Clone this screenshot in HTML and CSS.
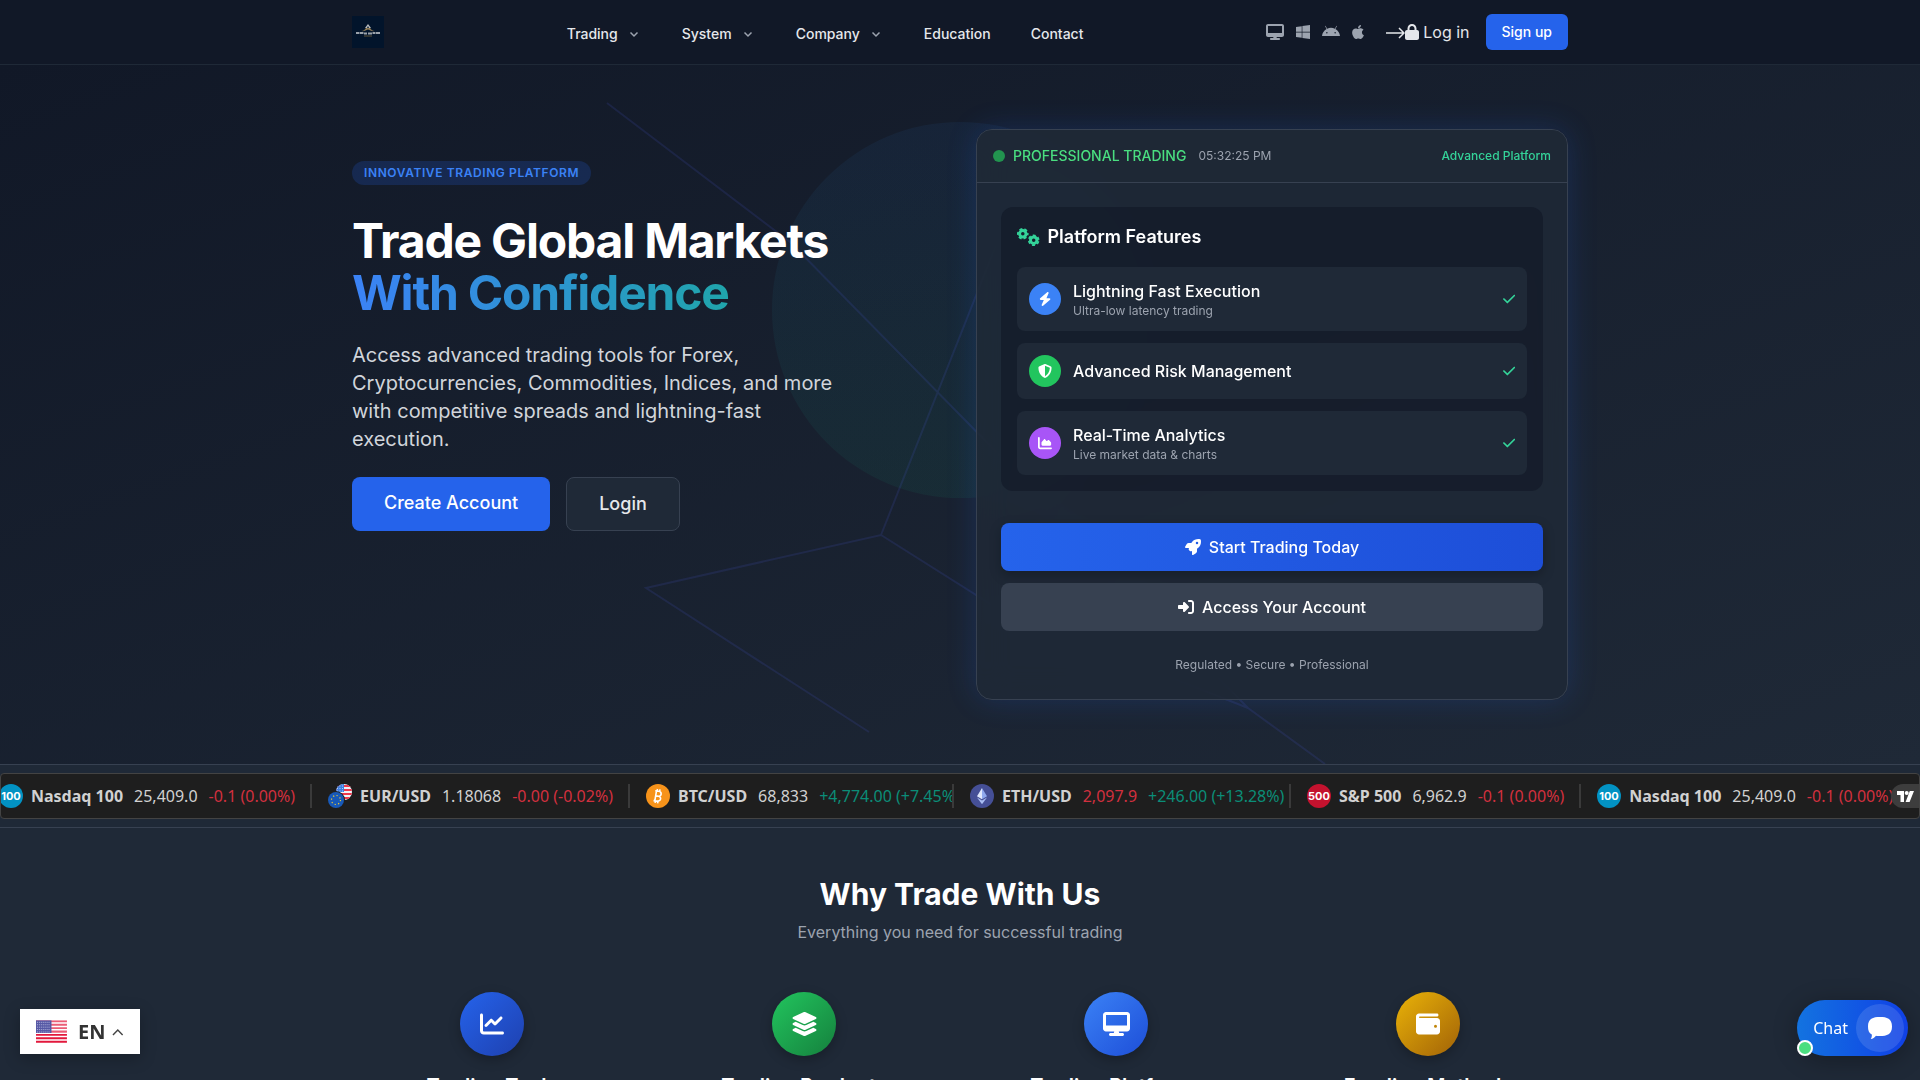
FILE: index.html
```
<!DOCTYPE html>
<html lang="en">
<head>
    <meta charset="UTF-8">
    <meta name="viewport" content="width=device-width, initial-scale=1.0">
    <title>Trade Global Markets With Confidence</title>
    <link rel="stylesheet" href="styles.css">
</head>
<body>
    <header class="site-header">
        <div class="container header-inner">
            <a href="#" class="logo" aria-label="Home">
                <svg width="32" height="32" viewBox="0 0 32 32">
                    <rect width="32" height="32" fill="#02142b"/>
                    <path d="M16 8l3 4-2 0-1-2-1 2-2 0z" fill="#b9bcc0"/>
                    <path d="M9 15c3 0 4-2 5-3h4c1 1 2 3 5 3-3 .6-5-.6-7-1.4-2 .8-4 2-7 1.4z" fill="#8d7a55"/>
                    <path d="M4 17h3M7.500 17h4M12 17.500h3M16 17.500h4M20.500 17h3M24 17h4" stroke="#9aa1aa" stroke-width="2"/>
                    <path d="M12 20h8" stroke="#5f5238"/>
                </svg>
            </a>
            <nav class="main-nav">
                <a href="#">Trading <svg class="chevron" viewBox="0 0 16 16"><path d="M4.5 6.500L8 10l3.500-3.500"/></svg></a>
                <a href="#">System <svg class="chevron" viewBox="0 0 16 16"><path d="M4.5 6.500L8 10l3.500-3.500"/></svg></a>
                <a href="#">Company <svg class="chevron" viewBox="0 0 16 16"><path d="M4.5 6.500L8 10l3.500-3.500"/></svg></a>
                <a href="#">Education</a>
                <a href="#">Contact</a>
            </nav>
            <div class="header-actions">
                <div class="platforms">
                    <a href="#" aria-label="Desktop"><svg class="icon" viewBox="0 0 576 512"><path d="M64 0C28.700 0 0 28.700 0 64V352c0 35.300 28.700 64 64 64H240l-10.700 32H160c-17.700 0-32 14.300-32 32s14.300 32 32 32H416c17.700 0 32-14.300 32-32s-14.300-32-32-32H346.700L336 416H512c35.300 0 64-28.700 64-64V64c0-35.300-28.700-64-64-64H64zM512 64V288H64V64H512z"/></svg></a>
                    <a href="#" aria-label="Windows"><svg class="icon" viewBox="0 0 448 512"><path d="M0 93.700l183.600-25.300v177.400H0V93.700zm0 324.600l183.600 25.300V268.400H0v149.900zm203.800 28L448 480V268.400H203.800v177.900zm0-380.600v180.100H448V32L203.800 65.700z"/></svg></a>
                    <a href="#" aria-label="Android"><svg class="icon" viewBox="0 0 576 512"><path d="M420.550,301.930a24,24,0,1,1,24-24,24,24,0,0,1-24,24m-265.100,0a24,24,0,1,1,24-24,24,24,0,0,1-24,24m273.700-144.480,47.940-83a10,10,0,1,0-17.270-10h0l-48.540,84.070a301.250,301.250,0,0,0-246.560,0L116.180,64.450a10,10,0,1,0-17.270,10h0l47.940,83C64.530,202.220,8.240,285.550,0,384H576c-8.240-98.450-64.540-181.780-146.850-226.550"/></svg></a>
                    <a href="#" aria-label="Apple"><svg class="icon" viewBox="0 0 384 512"><path d="M318.700 268.700c-.2-36.700 16.400-64.400 50-84.800-18.800-26.900-47.200-41.700-84.700-44.600-35.500-2.800-74.300 20.700-88.500 20.700-15 0-49.400-19.700-76.400-19.700C63.300 141.200 4 184.800 4 273.500q0 39.300 14.400 81.200c12.800 36.700 59 126.700 107.200 125.200 25.200-.6 43-17.900 75.800-17.900 31.800 0 48.300 17.900 76.400 17.900 48.600-.7 90.400-82.500 102.600-119.300-65.200-30.700-61.700-90-61.700-91.900zm-56.600-164.200c27.300-32.400 24.800-61.900 24-72.500-24.100 1.400-52 16.400-67.900 34.900-17.500 19.800-27.800 44.300-25.600 71.900 26.100 2 49.900-11.400 69.500-34.300z"/></svg></a>
                </div>
                <a href="#" class="login-link">
                    <svg class="arrow" width="19" height="16" viewBox="0 0 19 16"><path d="M0 9h18M13 4l5 5-5 5"/></svg>
                    <svg class="icon" viewBox="0 0 448 512"><path d="M144 144v48H304V144c0-44.200-35.800-80-80-80s-80 35.800-80 80zM80 192V144C80 64.500 144.500 0 224 0s144 64.500 144 144v48h16c35.300 0 64 28.700 64 64V448c0 35.300-28.700 64-64 64H64c-35.300 0-64-28.700-64-64V256c0-35.300 28.700-64 64-64H80z"/></svg>
                    <span>Log in</span>
                </a>
                <a href="#" class="signup">Sign up</a>
            </div>
        </div>
    </header>

    <main>
        <section class="hero">
            <svg class="hero-bg" viewBox="0 0 1920 699" preserveAspectRatio="xMidYMid slice" aria-hidden="true">
                <defs>
                    <linearGradient id="orb" x1="0" y1="0" x2="0" y2="1">
                        <stop offset="0" stop-color="#2f7fe0" stop-opacity=".07"/>
                        <stop offset="1" stop-color="#10b981" stop-opacity=".07"/>
                    </linearGradient>
                </defs>
                <circle cx="960" cy="245" r="188" fill="url(#orb)"/>
                <path class="mesh" d="M607 38L790 177L1248 643L1325 699M881 470L1010 145M869 667L646 523L881 470L1000 545L1248 643"/>
            </svg>
            <div class="container hero-grid">
                <div class="hero-copy">
                    <span class="badge">INNOVATIVE TRADING PLATFORM</span>
                    <h1>Trade Global Markets <span class="gradient-text">With Confidence</span></h1>
                    <p>Access advanced trading tools for Forex, Cryptocurrencies, Commodities, Indices, and more with competitive spreads and lightning-fast execution.</p>
                    <div class="hero-buttons">
                        <a href="#" class="btn btn-primary">Create Account</a>
                        <a href="#" class="btn btn-outline">Login</a>
                    </div>
                </div>

                <div class="panel">
                    <div class="panel-head">
                        <span class="dot"></span>
                        <span class="panel-title">PROFESSIONAL TRADING</span>
                        <span class="clock">05:32:25 PM</span>
                        <span class="panel-tag">Advanced Platform</span>
                    </div>
                    <div class="panel-body">
                        <div class="features">
                            <h2>
                                <svg class="icon gears" viewBox="0 0 640 512">
                                    <g fill="none">
                                        <circle cx="165" cy="165" r="92" stroke-width="84"/>
                                        <circle cx="165" cy="165" r="140" stroke-width="50" stroke-dasharray="84 62.600" stroke-dashoffset="42"/>
                                        <circle cx="475" cy="347" r="92" stroke-width="84"/>
                                        <circle cx="475" cy="347" r="140" stroke-width="50" stroke-dasharray="84 62.600" stroke-dashoffset="-31"/>
                                    </g>
                                </svg>
                                Platform Features
                            </h2>
                            <ul>
                                <li>
                                    <span class="round blue"><svg class="icon" viewBox="0 0 448 512"><path d="M349.400 44.600c5.900-13.700 1.500-29.700-10.600-38.500s-28.600-8-39.900 1.800l-256 224c-10 8.800-13.600 22.900-8.900 35.300S50.700 288 64 288H175.500L98.600 467.400c-5.900 13.700-1.500 29.700 10.600 38.500s28.600 8 39.900-1.800l256-224c10-8.800 13.600-22.900 8.900-35.300s-16.600-20.700-30-20.700H272.500L349.400 44.600z"/></svg></span>
                                    <div class="feature-text">
                                        <h3>Lightning Fast Execution</h3>
                                        <p>Ultra-low latency trading</p>
                                    </div>
                                    <svg class="icon check" viewBox="0 0 448 512"><path d="M438.600 105.400c12.500 12.500 12.500 32.800 0 45.300l-256 256c-12.500 12.500-32.800 12.500-45.300 0l-128-128c-12.500-12.500-12.500-32.800 0-45.300s32.800-12.500 45.300 0L160 338.700 393.400 105.400c12.500-12.500 32.800-12.500 45.300 0z"/></svg>
                                </li>
                                <li>
                                    <span class="round green"><svg class="icon" viewBox="0 0 512 512"><path d="M256 0c4.600 0 9.200 1 13.400 2.900L457.700 82.800c22 9.300 38.400 31 38.300 57.200c-.5 99.200-41.300 280.700-213.600 363.200c-16.700 8-36.100 8-52.800 0C57.300 420.700 16.500 239.200 16 140c-.1-26.200 16.300-47.900 38.300-57.200L242.700 2.900C246.800 1 251.400 0 256 0zm0 66.800V444.800C394 378 431.100 230.100 432 141.400L256 66.800l0 0z"/></svg></span>
                                    <div class="feature-text">
                                        <h3>Advanced Risk Management</h3>
                                    </div>
                                    <svg class="icon check" viewBox="0 0 448 512"><path d="M438.600 105.400c12.500 12.500 12.500 32.800 0 45.300l-256 256c-12.500 12.500-32.800 12.500-45.300 0l-128-128c-12.500-12.500-12.500-32.800 0-45.300s32.800-12.500 45.300 0L160 338.700 393.400 105.400c12.500-12.500 32.800-12.500 45.300 0z"/></svg>
                                </li>
                                <li>
                                    <span class="round purple"><svg class="icon" viewBox="0 0 512 512"><path d="M64 64c0-17.700-14.300-32-32-32S0 46.300 0 64V400c0 44.200 35.800 80 80 80H480c17.700 0 32-14.300 32-32s-14.300-32-32-32H80c-8.800 0-16-7.200-16-16V64zm96 288H448c17.700 0 32-14.300 32-32V251.800c0-7.600-2.700-15-7.700-20.800l-65.800-76.800c-12.100-14.200-33.700-15-46.900-1.800l-21 21c-10 10-26.400 9.200-35.400-1.600l-39.200-47c-12.600-15.100-35.700-15.400-48.700-.6L135.900 215c-5.100 5.800-7.900 13.300-7.900 21.100v84c0 17.700 14.300 32 32 32z"/></svg></span>
                                    <div class="feature-text">
                                        <h3>Real-Time Analytics</h3>
                                        <p>Live market data &amp; charts</p>
                                    </div>
                                    <svg class="icon check" viewBox="0 0 448 512"><path d="M438.600 105.400c12.500 12.500 12.500 32.800 0 45.300l-256 256c-12.500 12.500-32.800 12.500-45.300 0l-128-128c-12.500-12.500-12.500-32.800 0-45.300s32.800-12.500 45.300 0L160 338.700 393.400 105.400c12.500-12.500 32.800-12.500 45.300 0z"/></svg>
                                </li>
                            </ul>
                        </div>
                        <div class="panel-buttons">
                            <a href="#" class="panel-btn start">
                                <svg class="icon" viewBox="0 0 512 512"><path d="M156.600 384.900L125.700 354c-8.500-8.500-11.500-20.800-7.700-32.200c3-8.900 7-20.500 11.800-33.800L24 288c-8.600 0-16.600-4.600-20.900-12.100s-4.200-16.700 .2-24.100l52.500-88.500c13-21.900 36.500-35.300 61.900-35.300l82.300 0c2.400-4 4.800-7.700 7.200-11.300C289.100-4.100 411.100-8.100 483.900 5.300c11.600 2.100 20.600 11.200 22.800 22.800c13.400 72.900 9.300 194.800-111.400 276.700c-3.500 2.400-7.300 4.800-11.300 7.200v82.300c0 25.400-13.400 49-35.300 61.900l-88.500 52.500c-7.400 4.400-16.600 4.500-24.100 .2s-12.100-12.200-12.100-20.900V380.800c-14.100 4.900-26.400 8.900-35.700 11.900c-11.200 3.600-23.400 .5-31.800-7.800zM384 168a40 40 0 1 0 0-80 40 40 0 1 0 0 80z"/></svg>
                                Start Trading Today
                            </a>
                            <a href="#" class="panel-btn access">
                                <svg class="icon" viewBox="0 0 512 512"><path d="M217.900 105.900L340.700 228.700c7.200 7.200 11.300 17.100 11.300 27.300s-4.100 20.100-11.300 27.300L217.900 406.100c-6.400 6.400-15 9.900-24 9.900c-18.700 0-33.900-15.200-33.900-33.900l0-62.100L32 320c-17.700 0-32-14.300-32-32l0-64c0-17.700 14.300-32 32-32l128 0 0-62.100c0-18.700 15.200-33.900 33.900-33.900c9 0 17.600 3.600 24 9.900zM352 416l64 0c17.700 0 32-14.300 32-32l0-256c0-17.700-14.300-32-32-32l-64 0c-17.700 0-32-14.300-32-32s14.300-32 32-32l64 0c53 0 96 43 96 96l0 256c0 53-43 96-96 96l-64 0c-17.700 0-32-14.300-32-32s14.300-32 32-32z"/></svg>
                                Access Your Account
                            </a>
                        </div>
                        <p class="panel-note">Regulated • Secure • Professional</p>
                    </div>
                </div>
            </div>
        </section>

        <section class="ticker-section">
            <div class="ticker">
                <div class="ticker-item first">
                    <svg class="coin" viewBox="0 0 24 24"><circle cx="12" cy="12" r="12" fill="#0292c3"/><text x="12" y="16" text-anchor="middle">100</text></svg>
                    <b>Nasdaq 100</b><span>25,409.0</span><span class="down">-0.1 (0.00%)</span>
                </div>
                <div class="ticker-item">
                    <svg class="coin" viewBox="0 0 24 24">
                        <defs><clipPath id="us"><circle cx="16" cy="8" r="8"/></clipPath></defs>
                        <g clip-path="url(#us)">
                            <path d="M8 0h16v16H8z" fill="#f0f3fa"/>
                            <path d="M8 2h16M8 6h16M8 10h16M8 14h16" stroke="#f0394d" stroke-width="2"/>
                            <path d="M8 0h8v8H8z" fill="#3f7fe0"/>
                            <path d="M9 2h7M9 4.500h7M9 7h7" stroke="#a9cbff" stroke-dasharray="1 1.500"/>
                        </g>
                        <circle cx="8" cy="16" r="9" fill="#1e1e1e"/>
                        <circle cx="8" cy="16" r="8" fill="#1859b8"/>
                        <circle cx="8" cy="16" r="4.500" fill="none" stroke="#e3c439" stroke-width="1.200" stroke-dasharray="1.200 2.330"/>
                    </svg>
                    <b>EUR/USD</b><span>1.18068</span><span class="down">-0.00 (-0.02%)</span>
                </div>
                <div class="ticker-item btc">
                    <svg class="coin" viewBox="0 0 24 24">
                        <circle cx="12" cy="12" r="12" fill="#f7931a"/>
                        <path d="M10.500 6.800L8.800 16.800M7.500 16.600l3.800.5c3.700.5 4.600-4.200 1.200-4.800l-2.700-.4M9.200 6.700l3.600.6c3.400.6 3 4.800-.3 5M11.500 5l-.4 2.200M14 5.400l-.4 2.200M9.500 16.500l-.4 2.300M12 17l-.4 2.300" fill="none" stroke="#fff" stroke-width="1.600"/>
                    </svg>
                    <b>BTC/USD</b><span>68,833</span><span class="up">+4,774.00 (+7.45%)</span>
                </div>
                <div class="ticker-item eth">
                    <svg class="coin" viewBox="0 0 24 24">
                        <circle cx="12" cy="12" r="12" fill="#454f96"/>
                        <path d="M12 4l5 8.300-5 3z" fill="#8fa8ee"/><path d="M12 4l-5 8.300 5 3z" fill="#dfe7fc"/>
                        <path d="M7 13.600l5 3 5-3-5 6.600z" fill="#a9bdf3"/>
                    </svg>
                    <b>ETH/USD</b><span class="down">2,097.9</span><span class="up">+246.00 (+13.28%)</span>
                </div>
                <div class="ticker-item">
                    <svg class="coin" viewBox="0 0 24 24"><circle cx="12" cy="12" r="12" fill="#c4122e"/><text x="12" y="16" text-anchor="middle">500</text></svg>
                    <b>S&amp;P 500</b><span>6,962.9</span><span class="down">-0.1 (0.00%)</span>
                </div>
                <div class="ticker-item">
                    <svg class="coin" viewBox="0 0 24 24"><circle cx="12" cy="12" r="12" fill="#0292c3"/><text x="12" y="16" text-anchor="middle">100</text></svg>
                    <b>Nasdaq 100</b><span>25,409.0</span><span class="down">-0.1 (0.00%)</span>
                </div>
                <a href="#" class="tv-badge" aria-label="TradingView">
                    <svg width="17" height="11" viewBox="0 0 17 11"><path d="M0 0h7v11H3.500V4H0zM12.800 0H17l-4.400 11H8.600z" fill="#fff"/><circle cx="9.700" cy="2" r="2" fill="#fff"/></svg>
                </a>
            </div>
        </section>

        <section class="why">
            <div class="container">
                <h2>Why Trade With Us</h2>
                <p class="lead">Everything you need for successful trading</p>
                <div class="why-grid">
                    <div class="why-card">
                        <span class="why-icon tools"><svg class="icon" viewBox="0 0 512 512"><path d="M64 64c0-17.700-14.300-32-32-32S0 46.300 0 64V400c0 44.200 35.800 80 80 80H480c17.700 0 32-14.300 32-32s-14.300-32-32-32H80c-8.800 0-16-7.200-16-16V64zm406.600 86.600c12.500-12.500 12.500-32.800 0-45.300s-32.800-12.500-45.300 0L320 210.700l-57.400-57.400c-12.500-12.500-32.800-12.500-45.300 0l-112 112c-12.500 12.500-12.500 32.800 0 45.300s32.800 12.500 45.300 0L240 221.300l57.400 57.400c12.500 12.500 32.800 12.500 45.300 0l128-128z"/></svg></span>
                        <h3>Trading Tools</h3>
                    </div>
                    <div class="why-card">
                        <span class="why-icon products"><svg class="icon" viewBox="0 0 576 512"><path d="M264.500 5.200c14.900-6.900 32.100-6.900 47 0l218.600 101c8.500 3.900 13.900 12.400 13.900 21.800s-5.400 17.900-13.900 21.800l-218.600 101c-14.900 6.900-32.100 6.900-47 0L45.900 149.800C37.400 145.800 32 137.300 32 128s5.400-17.900 13.900-21.800L264.500 5.200zM476.900 209.600l53.200 24.600c8.500 3.900 13.900 12.400 13.900 21.800s-5.400 17.900-13.900 21.800l-218.600 101c-14.900 6.900-32.100 6.900-47 0L45.900 277.800C37.400 273.800 32 265.300 32 256s5.400-17.900 13.900-21.800l53.200-24.600 152 70.200c23.400 10.800 50.400 10.800 73.800 0l152-70.200zm-152 198.200l152-70.200 53.200 24.600c8.500 3.900 13.900 12.400 13.900 21.800s-5.400 17.900-13.900 21.800l-218.600 101c-14.900 6.900-32.100 6.900-47 0L45.900 405.800C37.400 401.800 32 393.300 32 384s5.400-17.900 13.900-21.800l53.200-24.600 152 70.200c23.400 10.800 50.400 10.800 73.800 0z"/></svg></span>
                        <h3>Trading Products</h3>
                    </div>
                    <div class="why-card">
                        <span class="why-icon platform"><svg class="icon" viewBox="0 0 576 512"><path d="M64 0C28.700 0 0 28.700 0 64V352c0 35.300 28.700 64 64 64H240l-10.700 32H160c-17.700 0-32 14.300-32 32s14.300 32 32 32H416c17.700 0 32-14.300 32-32s-14.300-32-32-32H346.700L336 416H512c35.300 0 64-28.700 64-64V64c0-35.300-28.700-64-64-64H64zM512 64V288H64V64H512z"/></svg></span>
                        <h3>Trading Platforms</h3>
                    </div>
                    <div class="why-card">
                        <span class="why-icon funding"><svg class="icon" viewBox="0 0 512 512"><path d="M64 32C28.700 32 0 60.700 0 96V416c0 35.300 28.700 64 64 64H448c35.300 0 64-28.700 64-64V192c0-35.300-28.700-64-64-64H80c-8.800 0-16-7.200-16-16s7.200-16 16-16H448c17.700 0 32-14.300 32-32s-14.300-32-32-32H64zM416 272a32 32 0 1 1 0 64 32 32 0 1 1 0-64z"/></svg></span>
                        <h3>Funding Methods</h3>
                    </div>
                </div>
            </div>
        </section>
    </main>

    <button class="lang" type="button">
        <svg width="32" height="24" viewBox="0 0 32 24">
            <path d="M0 0h32v24H0z" fill="#fff"/>
            <path d="M0 1h32M0 4.500h32M0 8h32M0 11.500h32M0 15h32M0 18.500h32M0 22h32" stroke="#e2183c" stroke-width="2"/>
            <path d="M0 0h32v12H0z" fill="#fff" opacity=".3"/>
            <path d="M0 0h16v13H0z" fill="#5558a5"/>
            <path d="M1 2h14M1 4.500h14M1 7h14M1 9.500h14M1 12h14" stroke="#b9bbdf" stroke-dasharray="1 1"/>
        </svg>
        <span>EN</span>
        <svg width="12" height="8" viewBox="0 0 12 8"><path d="M1 7l5-5 5 5" fill="none" stroke="#444" stroke-width="1.500"/></svg>
    </button>

    <button class="chat" type="button">
        <span>Chat</span>
        <span class="chat-icon">
            <svg width="24" height="22" viewBox="0 0 24 22"><path d="M12 0c7 0 12 1.500 12 9.500S19 19 12 19c-1.500 0-3 0-4-.3-1.500 1.800-3 3-5.200 3.300.8-1.300 1.200-2.600 1-4.400C1 16 0 13.500 0 9.500 0 1.500 5 0 12 0z" fill="#fff"/></svg>
        </span>
        <span class="status"></span>
    </button>
</body>
</html>
```
FILE: styles.css
```
* {
    margin: 0;
    padding: 0;
    box-sizing: border-box;
}
body {
    font-family: Inter, "Liberation Sans", sans-serif;
    font-size: 16px;
    line-height: 24px;
    color: #e5e7eb;
    background-color: #1f2937;
    overflow-x: hidden;
}
a {
    color: inherit;
    text-decoration: none;
}
ul {
    list-style: none;
}
.container {
    max-width: 1280px;
    margin: 0 auto;
    padding: 0 32px;
}
.icon {
    height: 1em;
    width: auto;
    display: block;
    flex: none;
    fill: currentColor;
}

/* header */
.site-header {
    background-color: #111827;
    border-bottom: 1px solid #1f2937;
}
.header-inner {
    height: 64px;
    display: flex;
    align-items: center;
    justify-content: space-between;
}
.logo svg {
    display: block;
}
.main-nav {
    display: flex;
    gap: 40px;
    padding-top: 4px;
    font-size: 14px;
    font-weight: 500;
}
.main-nav a {
    display: flex;
    align-items: center;
    gap: 8px;
}
.chevron {
    width: 16px;
    height: 16px;
    fill: none;
    stroke: #9ca3af;
    stroke-width: 1.5;
}
.header-actions,
.platforms,
.login-link {
    display: flex;
    align-items: center;
}
.platforms {
    gap: 12px;
    color: #9ca3af;
}
.login-link {
    margin: 0 16px 0 22px;
}
.login-link span {
    margin-left: 4px;
}
.arrow {
    fill: none;
    stroke: #e5e7eb;
    stroke-width: 1.5;
}
.signup {
    padding: 8px 16px;
    line-height: 20px;
    font-size: 14px;
    font-weight: 500;
    color: #fff;
    background-color: #2563eb;
    border-radius: 6px;
}

/* hero */
.hero {
    position: relative;
    padding: 64px 0;
    background: linear-gradient(to bottom right, #111827, #1f2937);
}
.hero-bg {
    position: absolute;
    top: 0;
    left: 0;
    width: 100%;
    height: 100%;
}
.mesh {
    fill: none;
    stroke: #4f5ae5;
    stroke-opacity: .14;
    stroke-width: 2;
}
.hero-grid {
    position: relative;
    display: grid;
    grid-template-columns: 1fr 1fr;
    gap: 32px;
}
.hero-copy {
    padding-top: 32px;
}
.badge {
    display: block;
    width: fit-content;
    padding: 4px 12px;
    font-size: 12px;
    line-height: 16px;
    font-weight: 600;
    letter-spacing: .05em;
    color: #3b82f6;
    background-color: rgba(37, 99, 235, .2);
    border-radius: 12px;
}
h1 {
    margin: 30px 0 22px;
    font-size: 48px;
    line-height: 52px;
    font-weight: 700;
    letter-spacing: -.025em;
    color: #fff;
}
.gradient-text {
    display: block;
    color: transparent;
    background: linear-gradient(to right, #3b82f6, #10b981);
    -webkit-background-clip: text;
    background-clip: text;
}
.hero-copy p {
    max-width: 500px;
    font-size: 20px;
    line-height: 28px;
    color: #d1d5db;
}
.hero-buttons {
    display: flex;
    gap: 16px;
    margin-top: 24px;
}
.btn {
    padding: 12px 32px;
    font-size: 18px;
    line-height: 28px;
    font-weight: 500;
    border-radius: 8px;
}
.btn-primary {
    color: #fff;
    background-color: #2563eb;
}
.btn-outline {
    background-color: #1f2937;
    border: 1px solid #374151;
}

/* trading panel */
.panel {
    background-color: rgba(31, 41, 55, .8);
    border: 1px solid #374151;
    border-radius: 16px;
    box-shadow: 0 0 30px rgba(37, 99, 235, .2);
    backdrop-filter: blur(16px);
    overflow: hidden;
}
.panel-head {
    display: flex;
    align-items: center;
    padding: 16px;
    line-height: 20px;
    font-size: 12px;
    background-color: rgba(31, 41, 55, .6);
    border-bottom: 1px solid #374151;
}
.dot {
    width: 12px;
    height: 12px;
    margin-right: 8px;
    border-radius: 50%;
    background-color: #22934f;
}
.panel-title {
    font-size: 14px;
    font-weight: 500;
    color: #4ade80;
}
.clock {
    margin-left: 12px;
    color: #9ca3af;
}
.panel-tag {
    margin-left: auto;
    font-weight: 500;
    color: #34d399;
}
.panel-body {
    padding: 24px;
}
.features {
    padding: 16px;
    background-color: rgba(17, 24, 39, .6);
    border-radius: 12px;
}
.features h2 {
    display: flex;
    align-items: center;
    gap: 8px;
    margin-bottom: 16px;
    font-size: 18px;
    line-height: 28px;
    font-weight: 600;
    color: #fff;
}
.gears {
    stroke: #34d399;
}
.features ul {
    display: grid;
    gap: 12px;
}
.features li {
    display: flex;
    align-items: center;
    gap: 12px;
    padding: 12px;
    background-color: #1f2937;
    border-radius: 8px;
}
.round {
    display: flex;
    align-items: center;
    justify-content: center;
    width: 32px;
    height: 32px;
    font-size: 14px;
    color: #fff;
    border-radius: 50%;
}
.blue { background-color: #3b82f6; }
.green { background-color: #22c55e; }
.purple { background-color: #a855f7; }
.feature-text {
    flex: 1;
}
.feature-text h3 {
    font-size: 16px;
    font-weight: 500;
    color: #fff;
}
.feature-text p {
    font-size: 12px;
    line-height: 16px;
    color: #9ca3af;
}
.check {
    font-size: 14px;
    color: #34d399;
}
.panel-buttons {
    display: grid;
    gap: 12px;
    margin: 32px 0 24px;
}
.panel-btn {
    display: flex;
    align-items: center;
    justify-content: center;
    gap: 8px;
    padding: 12px;
    font-weight: 500;
    color: #fff;
    border-radius: 8px;
}
.start {
    background: linear-gradient(to right, #2563eb, #1d4ed8);
    box-shadow: 0 4px 12px rgba(0, 0, 0, .25);
}
.access {
    background-color: #374151;
}
.panel-note {
    font-size: 12px;
    line-height: 20px;
    text-align: center;
    color: #9ca3af;
}

/* ticker */
.ticker-section {
    padding: 8px 0;
    border-top: 1px solid #374151;
    border-bottom: 1px solid #374151;
}
.ticker {
    position: relative;
    display: flex;
    align-items: center;
    height: 46px;
    overflow: hidden;
    font-family: "Noto Sans", sans-serif;
    white-space: nowrap;
    color: #d1d1d1;
    background-color: #1e1e1e;
    border: 1px solid #434343;
    border-radius: 4px;
}
.ticker-item {
    flex: none;
    display: flex;
    align-items: center;
    gap: 11px;
    padding: 0 15px 0 16px;
    overflow: hidden;
    border-right: 2px solid #3a3a3a;
}
.ticker-item.first {
    margin-left: -18px;
}
.ticker-item.btc {
    width: 324px;
    padding-right: 0;
}
.ticker-item.eth {
    width: 337px;
    padding-right: 0;
}
.ticker-item:nth-child(6) {
    border-right: 0;
}
.coin {
    width: 24px;
    height: 24px;
    margin-right: -3px;
    flex: none;
}
.coin text {
    font: 700 11px Inter, sans-serif;
    fill: #fff;
}
.down { color: #d2303e; }
.up { color: #0b8d78; }
.tv-badge {
    position: absolute;
    top: 10px;
    right: 0;
    display: flex;
    align-items: center;
    width: 28px;
    height: 24px;
    padding-left: 6px;
    background-color: #3d3d3d;
    border-radius: 12px 0 0 12px;
}

/* why trade with us */
.why {
    padding: 48px 0;
    text-align: center;
}
.why h2 {
    font-size: 30px;
    line-height: 36px;
    font-weight: 700;
    color: #fff;
}
.lead {
    margin-top: 8px;
    color: #9ca3af;
}
.why-grid {
    display: grid;
    grid-template-columns: repeat(4, 1fr);
    gap: 32px;
    margin-top: 48px;
}
.why-icon {
    display: flex;
    align-items: center;
    justify-content: center;
    width: 64px;
    height: 64px;
    margin: 0 auto 16px;
    font-size: 24px;
    color: #fff;
    border-radius: 50%;
    box-shadow: 0 4px 12px rgba(0, 0, 0, .25);
}
.tools { background: linear-gradient(to bottom right, #2563eb, #1e40af); }
.products { background: linear-gradient(to bottom right, #22c55e, #15803d); }
.platform { background: linear-gradient(to bottom right, #3b82f6, #1d4ed8); }
.funding { background: linear-gradient(to bottom right, #eab308, #a16207); }
.why-card h3 {
    font-size: 20px;
    line-height: 28px;
    font-weight: 600;
    color: #fff;
}

/* floating widgets */
.lang {
    position: fixed;
    left: 20px;
    bottom: 26px;
    display: flex;
    align-items: center;
    width: 120px;
    height: 45px;
    padding: 0 16px;
    font: 700 20px "Noto Sans", sans-serif;
    color: #333;
    background-color: #fff;
    border: 0;
    box-shadow: 0 4px 16px rgba(0, 0, 0, .25);
}
.lang span {
    margin: 0 7px 0 11px;
}
.chat {
    position: fixed;
    right: 12px;
    bottom: 24px;
    display: flex;
    align-items: center;
    gap: 8px;
    height: 56px;
    padding: 4px 4px 4px 16px;
    font: 16px "Noto Sans", sans-serif;
    color: #fff;
    background: linear-gradient(to right, #1373e0, #1040e6);
    border: 0;
    border-radius: 28px;
    box-shadow: 0 4px 24px rgba(0, 0, 0, .3);
}
.chat-icon {
    display: flex;
    align-items: center;
    justify-content: center;
    width: 48px;
    height: 48px;
    background-color: rgba(255, 255, 255, .12);
    border-radius: 50%;
}
.status {
    position: absolute;
    left: 0;
    bottom: 0;
    width: 16px;
    height: 16px;
    background-color: #4ade80;
    border: 2px solid #fff;
    border-radius: 50%;
}
```
